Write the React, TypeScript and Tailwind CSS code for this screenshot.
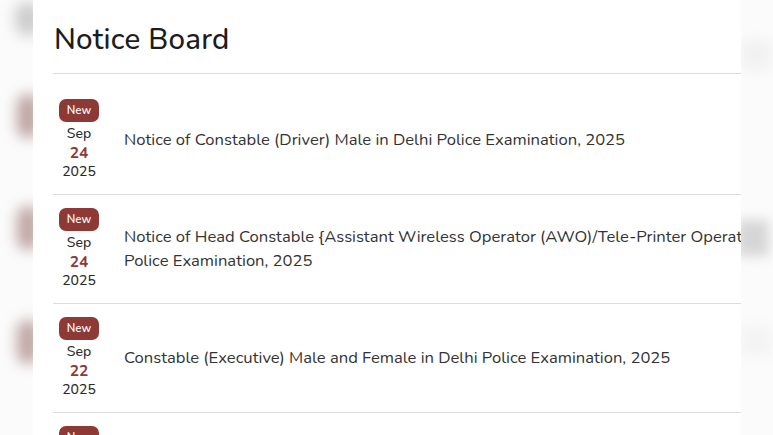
import React from 'react';

const notices = [
    { month: 'Sep', day: '24', year: '2025', lines: ['Notice of Constable (Driver) Male in Delhi Police Examination, 2025'] },
    {
        month: 'Sep',
        day: '24',
        year: '2025',
        lines: [
            'Notice of Head Constable {Assistant Wireless Operator (AWO)/Tele-Printer Operator (TPO)} Male in Delhi',
            'Police Examination, 2025',
        ],
    },
    { month: 'Sep', day: '22', year: '2025', lines: ['Constable (Executive) Male and Female in Delhi Police Examination, 2025'] },
    { month: 'Sep', day: '16', year: '2025', lines: ['Notice of Multi Tasking Staff in Delhi Police Examination, 2025'] },
];

const App: React.FC = () => {
    return (
        <div className="w-[773px] h-[435px] overflow-hidden bg-[#fbfbfb] flex font-['Nunito','Noto_Sans',sans-serif]">
            {/* blurred page behind, left side */}
            <div className="w-[33px] shrink-0 flex flex-col items-end">
                <div className="mt-[2px] w-[26px] h-[34px] rounded-full bg-[#cccccc] blur-[7px] mr-[-8px]" />
                <div className="mt-[58px] w-[22px] h-[44px] rounded-full bg-[#bda3a1] blur-[7px] mr-[-6px]" />
                <div className="mt-[68px] w-[22px] h-[44px] rounded-full bg-[#bfa5a3] blur-[7px] mr-[-6px]" />
                <div className="mt-[70px] w-[22px] h-[44px] rounded-full bg-[#bfa5a3] blur-[7px] mr-[-6px]" />
            </div>

            {/* card */}
            <div className="w-[708px] shrink-0 h-full bg-white overflow-hidden relative z-10">
                <div className="w-[820px] pl-[20px]">
                    <h1 className="pt-[21px] pb-[16px] pl-[1px] text-[29.5px] leading-[36px] font-medium text-[#1c1c1c] tracking-[0.2px]">
                        Notice Board
                    </h1>
                    <div className="border-t border-[#dddddd] pt-[12px]">
                        {notices.map((n, i) => (
                            <div key={i} className="flex items-center py-[13px] border-b border-[#dddddd]">
                                <div className="w-[52px] shrink-0 flex flex-col items-center">
                                    <span className="h-[23px] px-[8px] rounded-[7px] bg-[#8d3a36] text-white text-[11.5px] font-semibold leading-[23px]">
                                        New
                                    </span>
                                    <span className="mt-[2px] text-[14px] leading-[19px] font-medium text-[#2b2b2b]">{n.month}</span>
                                    <span className="text-[15.5px] leading-[19px] font-bold text-[#8d3a36]">{n.day}</span>
                                    <span className="text-[14px] leading-[19px] font-medium text-[#2b2b2b]">{n.year}</span>
                                </div>
                                <div className="ml-[19px] text-[16.6px] leading-[24px] text-[#333333] whitespace-nowrap">
                                    {n.lines.map((l, j) => (
                                        <div key={j}>{l}</div>
                                    ))}
                                </div>
                            </div>
                        ))}
                    </div>
                </div>
            </div>

            {/* blurred page behind, right side */}
            <div className="flex-1 flex flex-col items-start">
                <div className="mt-[40px] w-[30px] h-[30px] bg-[#f1f1f1] blur-[6px]" />
                <div className="mt-[150px] w-[32px] h-[36px] bg-[#d6d6d6] blur-[6px] ml-[-4px]" />
                <div className="mt-[70px] w-[30px] h-[30px] bg-[#f3f3f3] blur-[6px]" />
            </div>
        </div>
    );
};

export default App;
